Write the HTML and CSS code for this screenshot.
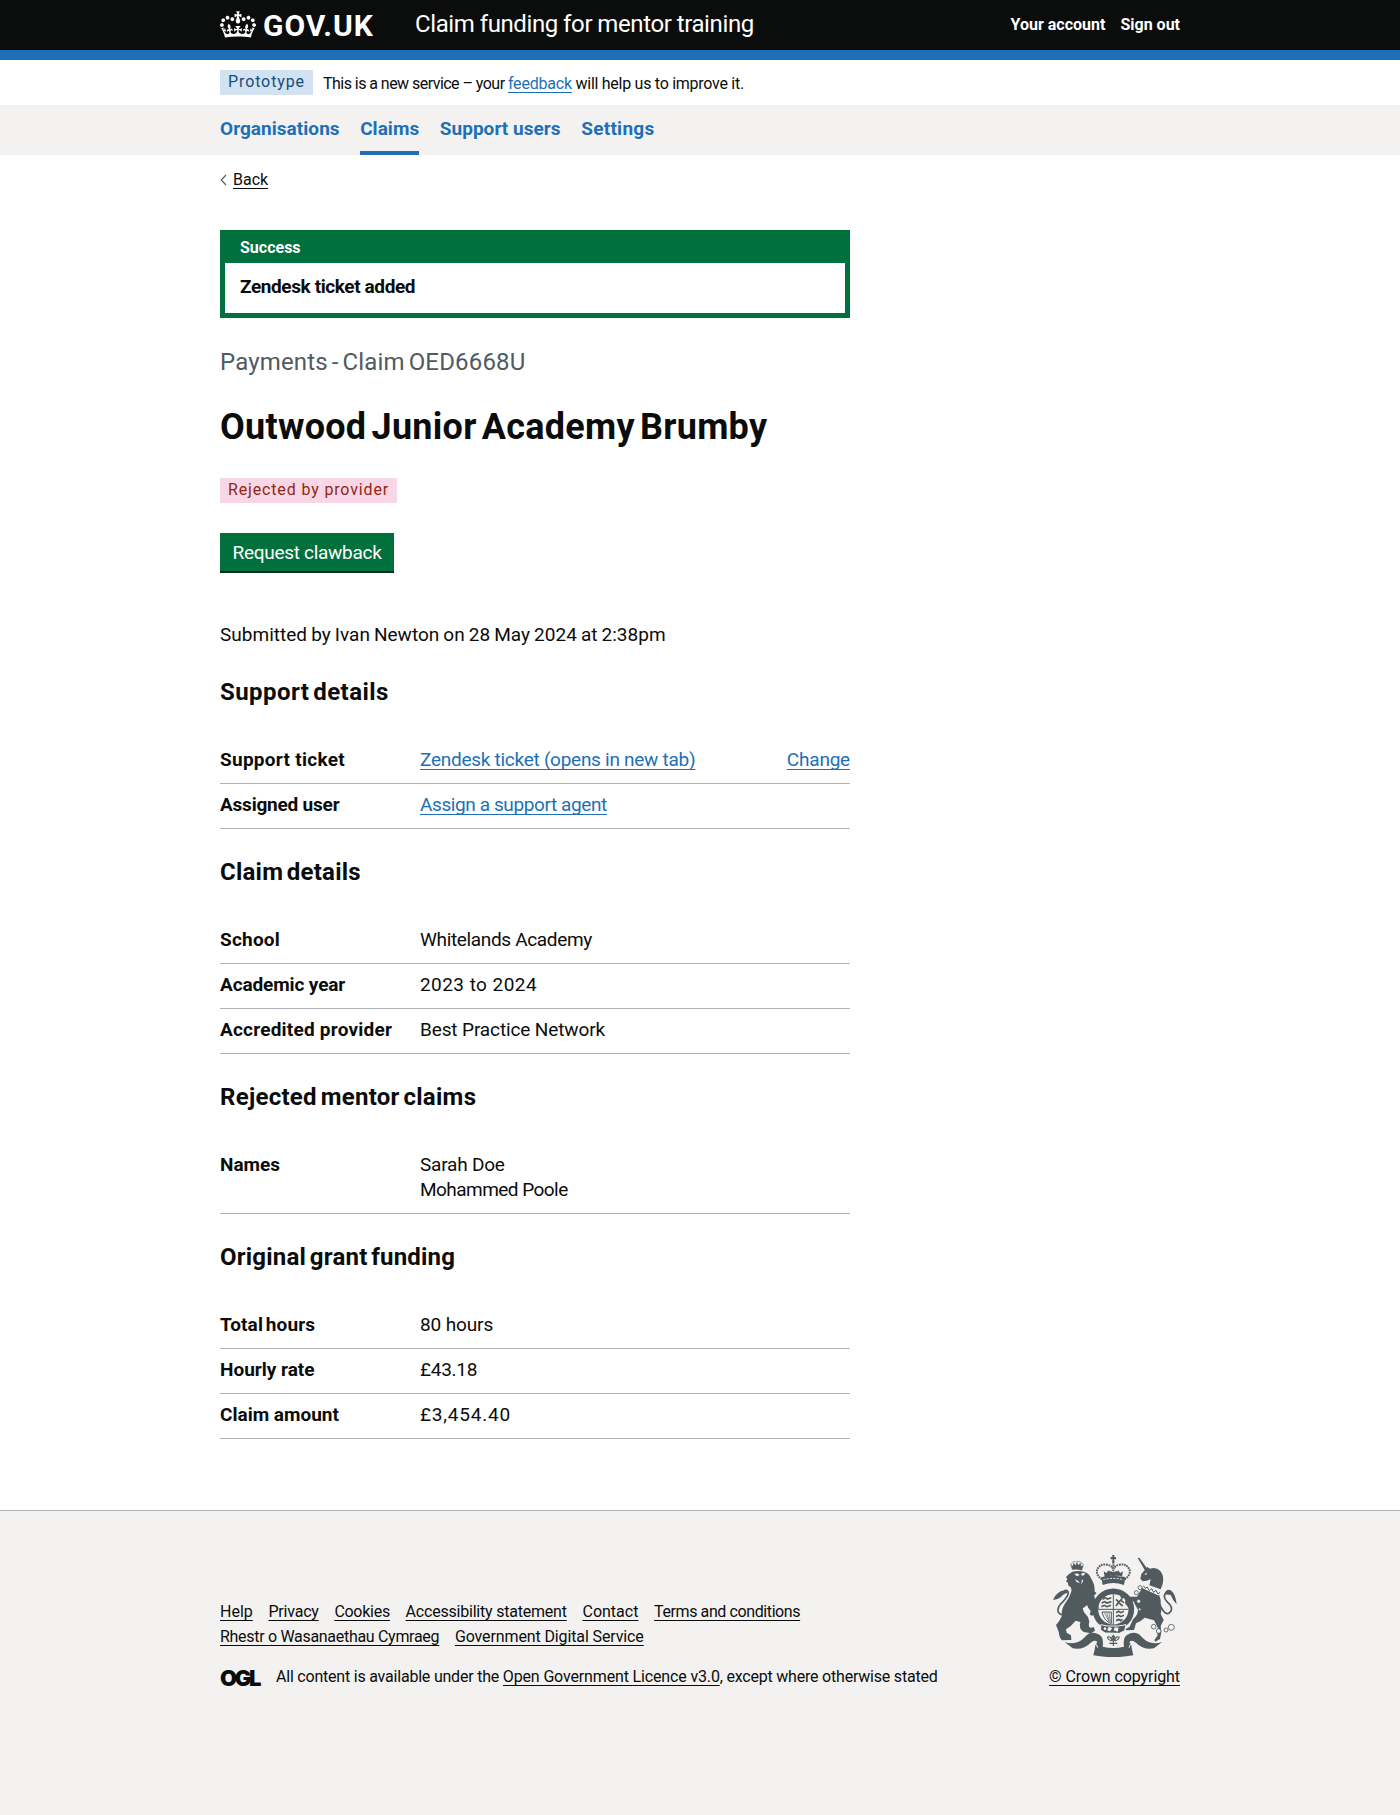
FILE: index.html
```html
<!DOCTYPE html>
<html lang="en">
<head>
<meta charset="utf-8">
<title>Outwood Junior Academy Brumby - Claim funding for mentor training</title>
<link rel="stylesheet" href="styles.css">
</head>
<body>
<header class="header">
  <div class="container header-inner">
    <a class="logo" href="#">
      <svg class="crown" viewBox="0 0 132 97" aria-hidden="true"><path d="M25 30.2c3.5 1.5 7.7-.2 9.1-3.7 1.5-3.6-.2-7.8-3.9-9.2-3.6-1.4-7.6.3-9.1 3.9-1.4 3.5.3 7.5 3.9 9zM9 39.5c3.6 1.5 7.8-.2 9.2-3.7 1.5-3.6-.2-7.8-3.9-9.1-3.6-1.5-7.6.2-9.1 3.8-1.4 3.5.3 7.5 3.8 9zM4.4 57.2c3.5 1.5 7.7-.2 9.1-3.8 1.5-3.6-.2-7.7-3.9-9.1-3.5-1.5-7.6.3-9.1 3.8-1.4 3.5.3 7.6 3.9 9.1zm38.3-21.4c3.5 1.5 7.7-.2 9.1-3.8 1.5-3.6-.2-7.7-3.9-9.1-3.6-1.5-7.6.3-9.1 3.8-1.3 3.6.4 7.7 3.9 9.1zm64.4-5.6c-3.6 1.5-7.8-.2-9.1-3.7-1.5-3.6.2-7.8 3.8-9.2 3.6-1.4 7.7.3 9.2 3.9 1.3 3.5-.4 7.5-3.9 9zm15.9 9.3c-3.6 1.5-7.7-.2-9.1-3.7-1.5-3.6.2-7.8 3.7-9.1 3.6-1.5 7.7.2 9.2 3.8 1.5 3.5-.3 7.5-3.8 9zm4.7 17.7c-3.6 1.5-7.8-.2-9.2-3.8-1.5-3.6.2-7.7 3.9-9.1 3.6-1.5 7.7.3 9.2 3.8 1.3 3.5-.4 7.6-3.9 9.1zM89.3 35.8c-3.6 1.5-7.8-.2-9.2-3.8-1.4-3.6.2-7.7 3.9-9.1 3.6-1.5 7.7.3 9.2 3.8 1.4 3.6-.3 7.7-3.9 9.1zM69.7 17.7l8.9 4.7V9.3l-8.9 2.8c-.2-.3-.5-.6-.9-.9L72.4 0H59.6l3.5 11.2c-.3.3-.6.5-.9.9l-8.8-2.8v13.1l8.8-4.7c.3.3.6.7.9.9l-5 15.4v.1c-.2.8-.4 1.6-.4 2.4 0 4.1 3.1 7.5 7 8.1h.2c.3 0 .7.1 1 .1.4 0 .7 0 1-.1h.2c4-.6 7.1-4.1 7.1-8.1 0-.8-.1-1.7-.4-2.4V34l-5.1-15.4c.4-.2.7-.6 1-.9zM66 92.8c16.9 0 32.8 1.1 47.1 3.2 4-16.9 8.9-26.7 14-33.5l-9.6-3.4c1 4.9 1.1 7.2 0 10.2-1.5-1.4-3-4.3-4.2-8.7L108.6 76c2.8-2 5-3.2 7.5-3.3-4.4 9.4-10 11.9-13.6 11.2-4.3-.8-6.3-4.6-5.6-7.9 1-4.7 5.7-5.9 8-.5 4.3-8.7-3-11.4-7.6-8.8 7.1-7.2 7.9-13.5 2.1-21.1-8 6.1-8.1 12.3-4.5 20.8-4.7-5.4-12.1-2.5-9.5 6.2 3.4-5.2 7.9-2 7.2 3.1-.6 4.3-6.4 7.8-13.5 7.2-10.3-.9-10.9-8-11.2-13.8 2.5-.5 7.1 1.8 11 7.3L80.2 60c-4.1 4.4-8 5.3-12.3 5.4 1.4-4.4 8-11.6 8-11.6H55.5s6.4 7.2 7.9 11.6c-4.2-.1-8-1-12.3-5.4l1.4 16.4c3.9-5.5 8.5-7.7 10.9-7.3-.3 5.8-.9 12.8-11.1 13.8-7.2.6-12.9-2.9-13.5-7.2-.7-5 3.8-8.3 7.1-3.1 2.7-8.7-4.6-11.6-9.4-6.2 3.7-8.5 3.6-14.7-4.6-20.8-5.8 7.6-5 13.9 2.2 21.1-4.7-2.6-11.9.1-7.7 8.8 2.3-5.5 7.1-4.2 8.1.5.7 3.3-1.3 7.1-5.7 7.9-3.5.7-9-1.8-13.5-11.2 2.5.1 4.7 1.3 7.5 3.3l-4.7-15.4c-1.2 4.4-2.7 7.2-4.3 8.7-1.1-3-.9-5.3 0-10.2l-9.5 3.4c5 6.9 9.9 16.7 14 33.5 14.8-2.1 30.8-3.2 47.7-3.2z"/></svg>
      <span class="logo-text">GOV.UK</span>
    </a>
    <a class="service-name" href="#">Claim funding for mentor training</a>
    <nav class="account">
      <a href="#">Your account</a>
      <a href="#">Sign out</a>
    </nav>
  </div>
</header>
<div class="blue-bar"></div>

<div class="container phase">
  <strong class="tag tag-blue">Prototype</strong>
  <p class="phase-text"><span class="ls-n54">This is a new service – your </span><a class="link ls-n20" href="#">feedback</a><span class="ls-n27"> will help us to improve it.</span></p>
</div>

<nav class="primary-nav">
  <div class="container nav-list">
    <a class="nav-item" href="#">Organisations</a>
    <a class="nav-item nav-current" href="#">Claims</a>
    <a class="nav-item" href="#">Support users</a>
    <a class="nav-item ls-p27" href="#">Settings</a>
  </div>
</nav>

<main class="container main">
  <div class="back">
    <svg class="chevron" viewBox="0 0 7 12" aria-hidden="true"><path d="M6 1 1.2 6 6 11" fill="none" stroke="#505a5f" stroke-width="1.2"/></svg>
    <a class="text-link" href="#">Back</a>
  </div>

  <div class="column">
    <section class="banner">
      <h2 class="banner-title">Success</h2>
      <p class="banner-content">Zendesk ticket added</p>
    </section>

    <p class="caption">Payments - Claim OED6668U</p>
    <h1 class="title">Outwood Junior Academy Brumby</h1>
    <strong class="tag tag-red">Rejected by provider</strong>
    <button class="button" type="button">Request clawback</button>
    <p class="submitted">Submitted by Ivan Newton on 28 May 2024 at 2:38pm</p>

    <h2 class="heading ls-p44">Support details</h2>
    <dl class="summary">
      <div class="row"><dt class="key ls-p27">Support ticket</dt><dd class="value"><a class="link ls-n27" href="#">Zendesk ticket (opens in new tab)</a></dd><dd class="action"><a class="link ls-n20" href="#">Change</a></dd></div>
      <div class="row"><dt class="key ls-n20">Assigned user</dt><dd class="value"><a class="link ls-n40" href="#">Assign a support agent</a></dd></div>
    </dl>

    <h2 class="heading ls-p20">Claim details</h2>
    <dl class="summary">
      <div class="row"><dt class="key ls-p20">School</dt><dd class="value ls-n34">Whitelands Academy</dd></div>
      <div class="row"><dt class="key ls-n12">Academic year</dt><dd class="value ls-p44">2023 to 2024</dd></div>
      <div class="row"><dt class="key ls-p20">Accredited provider</dt><dd class="value ls-n12">Best Practice Network</dd></div>
    </dl>

    <h2 class="heading ls-p27">Rejected mentor claims</h2>
    <dl class="summary">
      <div class="row"><dt class="key">Names</dt><dd class="value"><span class="ls-n20">Sarah Doe</span><br><span class="ls-n54">Mohammed Poole</span></dd></div>
    </dl>

    <h2 class="heading ls-p20">Original grant funding</h2>
    <dl class="summary">
      <div class="row"><dt class="key total">Total hours</dt><dd class="value ls-n12">80 hours</dd></div>
      <div class="row"><dt class="key">Hourly rate</dt><dd class="value ls-n27">£43.18</dd></div>
      <div class="row"><dt class="key">Claim amount</dt><dd class="value ls-p79">£3,454.40</dd></div>
    </dl>
  </div>
</main>

<footer class="footer">
  <div class="container footer-inner">
    <div class="footer-meta">
      <ul class="footer-links">
        <li><a class="text-link" href="#">Help</a></li>
        <li><a class="text-link ls-n20" href="#">Privacy</a></li>
        <li><a class="text-link ls-n27" href="#">Cookies</a></li>
        <li><a class="text-link ls-n20" href="#">Accessibility statement</a></li>
        <li><a class="text-link" href="#">Contact</a></li>
        <li><a class="text-link ls-n40" href="#">Terms and conditions</a></li>
        <li><a class="text-link ls-n30" href="#">Rhestr o Wasanaethau Cymraeg</a></li>
        <li><a class="text-link ls-n12" href="#">Government Digital Service</a></li>
      </ul>
      <div class="licence">
        <span class="ogl">OGL</span>
        <span class="licence-text">All content is available under the <a class="text-link ls-n15" href="#">Open Government Licence v3.0</a>, except where otherwise stated</span>
      </div>
    </div>
    <div class="copyright">
      <svg class="arms" viewBox="39 45 372 306" fill="#505a5f" aria-hidden="true">
        <!-- lion: crown, mane and body, tail -->
        <path d="M96 90 90 72l8 5 3-11 6 9 3-14 5 13 8-7 1 11 8-3-6 17q-14-4-30-2z" stroke="#f3f2f1" stroke-width="1.5"/>
        <g fill="none" stroke="#505a5f" stroke-width="3" stroke-dasharray="3 2"><path d="M92 74q4-10 16-10M112 64q14 0 18 12"/></g>
        <path d="M97 95q16-4 34 0 18 5 22 20 12 18 11 40l6 4-8 8q4 18 14 32l-3 22-18 6-6-4 3-10q-8-8-11-18-8 8-13 10l4 12 12 14 4 14q-4 12 2 18l12-1 3 10-12 8-22-4q-16-8-10-30l-14-4q-14 18-29 26l2 10 13 8 1 14-28 1q-8-8-10-26l-8-20q10-10 18-28-4-18 10-38 12-14 19-38l-3-10q-8-2-9-14l-5-2 4-8-4-6 6-6z"/>
        <path d="m103 103 9-3 7 5-8 4zM122 102l10-4 4 3-8 7zM104 118l10 4 6 8-10-4zM126 118l4 4-7 12z" fill="#f3f2f1"/>
        <path d="M86 213q-18 22-31 4-5-16 12-30 18-18 18-30-3-9-12-5" fill="none" stroke="#505a5f" stroke-width="5"/>
        <path d="M39 180q10-26 37-30l8 8q-16 4-22 14-10 8-23 8z"/>
        <!-- crown -->
        <path d="M216 45h8l-2 6h6v7h-6l2 8h-8l2-8h-6v-7h6z"/>
        <g fill="none" stroke="#505a5f" stroke-width="6" stroke-dasharray="5 2.5"><path d="M186 118q-20-14-14-31 10-17 29-13 15 3 17 12M254 118q20-14 14-31-10-17-29-13-15 3-17 12M220 66v40"/></g>
        <path d="M184 112q36-12 72 0l-4 23q-32-12-64 0zM194 110l-3-16 8 5 7-8 5 17zM246 110l3-16-8 5-7-8-5 17zM210 106l-3-14 13 5 13-5-3 14z"/>
        <path d="M190 119q30-8 60 0" fill="none" stroke="#f3f2f1" stroke-width="3" stroke-dasharray="6 4"/>
        <!-- garter and shield -->
        <circle cx="220" cy="208" r="54" fill="none" stroke="#505a5f" stroke-width="17"/>
        <path d="M220 163v92M175 208h90" fill="none" stroke="#505a5f" stroke-width="3"/>
        <g fill="none" stroke="#505a5f" stroke-width="5"><path d="m188 178 8-5 6 4 12-4M185 189l9-4 7 4 13-4M184 200l9-4 8 4 12-4M228 218l8-4 6 4 10-4M228 230l8-4 6 4 10-4M228 242l8-4 6 4 6-4"/><path d="m228 198 8-12-8-8M236 186l12-12M236 188l12 10M248 174l-6-5M240 180l12 8"/></g>
        <path d="M186 216h28v35q-22-8-28-35z" fill="none" stroke="#505a5f" stroke-width="3"/><path d="M193 217l14 27M200 217l8 28M207 217l4 30" stroke="#505a5f" stroke-width="2"/>
        <path d="m182 254 20 4 34 0 22-4-4 18-16 8-42-1-14-8z" stroke="#f3f2f1" stroke-width="3"/>
        <g fill="#f3f2f1"><circle cx="195" cy="266" r="4"/><path d="m207 260 10 5-7 9-9-4zM224 262l12 1-3 12-12-4z"/></g>
        <!-- unicorn: horn, head and body, tail, chain -->
        <path d="m293 54 5-1 25 35-7 5z"/>
        <path d="m301 116 3-14 12-14 6-7 8 5q18-6 30 6 14 14 8 40l-6 16-34-12 4-18-12 4-12 2z"/>
        <path d="M308 141q22 2 48 19l6 20q-1 16 4 22l-4 20 9 18-9 18 2 18-4 21-14 8-3-5 9-12 2-24-12-23-28-8q-12 12-26 17l-6 20-24 1-1-4 12-7 10-22q14-11 15-28l-14-26-14-2-2 13 9 10-5 2-13-17 2-14 8-6h26z"/>
        <path d="m310 139 48 22" fill="none" stroke="#f3f2f1" stroke-width="12"/>
        <path d="m310 137 6 8 6-4 6 11 7-6 6 11 7-6 6 11 6-5" fill="none" stroke="#505a5f" stroke-width="3"/>
        <path d="m313 102 9-4-4 7z" fill="#f3f2f1"/>
        <path d="M364 203q16 30 29 10 6-12-10-26-14-14-8-25 7-10 16-4" fill="none" stroke="#505a5f" stroke-width="5"/>
        <path d="M374 163q4-18 18-12 14 8 18 42-12-12-18-28z"/>
        <g fill="#f3f2f1" stroke="#505a5f" stroke-width="2.5"><circle cx="300" cy="143" r="6"/><circle cx="289" cy="158" r="6"/><circle cx="296" cy="184" r="6"/><circle cx="341" cy="260" r="7"/><circle cx="356" cy="273" r="7"/><circle cx="378" cy="270" r="6"/><circle cx="394" cy="262" r="9"/><circle cx="299" cy="208" r="4"/></g>
        <!-- motto ribbon and flower -->
        <path d="M74 306q36 12 60-14 18-22 44-8 14 8 10 36 32 8 64 0-4-28 10-36 26-14 44 8 24 26 60 14l-24 19q-32 6-54-17-12-11-20-2l6 10q2 16 6 30-60 11-120 0 4-14 6-30l6-10q-8-9-20 2-22 23-54 17z"/>
        <path d="M163 309q7 2 10 14M277 309q-7 2-10 14" fill="none" stroke="#f3f2f1" stroke-width="3"/>
        <g fill="none" stroke="#505a5f" stroke-width="3.5"><path d="M220 284v34M220 286q-9 8 0 15 9-7 0-15M215 303q-14-6-12-12 8-4 14 11M225 303q14-6 12-12-8-4-14 11M208 310h24"/></g>
      </svg>
      <a class="text-link" href="#">© Crown copyright</a>
    </div>
  </div>
</footer>
</body>
</html>
```
FILE: styles.css
```css
* { box-sizing: border-box; }
body {
  margin: 0;
  min-height: 1815px;
  display: flex;
  flex-direction: column;
  background: #fff;
  color: #0b0c0c;
  font-family: Roboto, "Liberation Sans", sans-serif;
  font-size: 19px;
  line-height: 25px;
}
h1, h2, p, dl, dd, ul { margin: 0; padding: 0; }
a { color: inherit; text-decoration: none; }
.container { width: 960px; margin: 0 auto; }

.link, .text-link {
  text-decoration: underline;
  text-decoration-thickness: 1px;
  text-underline-offset: 3px;
  text-decoration-skip-ink: none;
}
.link { color: #1d70b8; }

/* letter-spacing adjustments */
.ls-n54 { letter-spacing: -0.54px; }
.ls-n40 { letter-spacing: -0.4px; }
.ls-n34 { letter-spacing: -0.34px; }
.ls-n30 { letter-spacing: -0.3px; }
.ls-n27 { letter-spacing: -0.27px; }
.ls-n20 { letter-spacing: -0.21px; }
.ls-n15 { letter-spacing: -0.15px; }
.ls-n12 { letter-spacing: -0.12px; }
.ls-p20 { letter-spacing: 0.22px; }
.ls-p27 { letter-spacing: 0.28px; }
.ls-p44 { letter-spacing: 0.44px; }
.ls-p79 { letter-spacing: 0.79px; }

.header { background: #0b0c0c; color: #fff; height: 50px; }
.header-inner { display: flex; align-items: flex-start; height: 50px; }
.logo { display: flex; width: 195px; gap: 7px; }
.crown { width: 36px; height: 27px; margin-top: 11px; fill: #fff; }
.logo-text { font-size: 30px; font-weight: 700; line-height: 52px; letter-spacing: 1px; }
.service-name { font-size: 24px; line-height: 48px; letter-spacing: -0.38px; word-spacing: -0.4px; }
.account { display: flex; gap: 15px; margin-left: auto; font-size: 16px; font-weight: 700; line-height: 49px; }
.blue-bar { height: 10px; background: #1d70b8; }

.phase { display: flex; height: 45px; padding-top: 10px; gap: 10px; }
.tag { display: block; height: 25px; padding: 0 8px; font-size: 16px; font-weight: 400; line-height: 23px; white-space: nowrap; }
.tag-blue { width: 93px; background: #d2e2f1; color: #144e81; letter-spacing: 0.89px; }
.tag-red { width: 177px; margin-top: 31px; background: #f7d7e6; color: #942514; letter-spacing: 0.85px; }
.phase-text { font-size: 16px; line-height: 27px; }

.primary-nav { background: #f3f2f1; }
.nav-list { display: flex; gap: 20.5px; }
.nav-item { height: 50px; line-height: 47px; font-weight: 700; color: #1d70b8; white-space: nowrap; letter-spacing: 0.04px; }
.nav-item.ls-p27 { letter-spacing: 0.28px; }
.nav-current { border-bottom: 4px solid #1d70b8; }

.main { flex: none; }
.back { display: flex; gap: 6px; padding-top: 15px; font-size: 16px; line-height: 20px; }
.chevron { width: 7px; height: 12px; margin-top: 4px; }
.column { width: 630px; margin-top: 40px; }

.banner { border: 5px solid #00703c; border-top: 0; }
.banner-title { padding: 2px 15px 0; background: #00703c; color: #fff; font-size: 16px; line-height: 31px; }
.banner-content { padding: 0 15px 3px; font-weight: 700; line-height: 47px; letter-spacing: -0.4px; }

.caption { margin-top: 29px; color: #505a5f; font-size: 24px; line-height: 30px; letter-spacing: 0.17px; word-spacing: -2.2px; }
.title { margin-top: 30px; font-size: 36px; line-height: 40px; letter-spacing: 0.26px; word-spacing: -4px; }
.button {
  display: block;
  width: 174px;
  height: 40px;
  margin-top: 30px;
  padding: 0;
  border: 0;
  border-bottom: 2px solid #002d18;
  background: #00703c;
  color: #fff;
  font: 400 19px/39px Roboto, "Liberation Sans", sans-serif;
  letter-spacing: -0.29px;
}
.submitted { margin-top: 49px; letter-spacing: 0.02px; word-spacing: -0.7px; }

.heading { margin-top: 28px; font-size: 24px; line-height: 30px; word-spacing: -2.5px; }
.submitted + .heading { margin-top: 30px; }
.summary { margin-top: 32px; }
.row { display: grid; grid-template-columns: 200px 1fr auto; padding: 8px 0 11px; border-bottom: 1px solid #b1b4b6; }
.key { font-weight: 700; }
.total { letter-spacing: 0.1px; word-spacing: -2px; }

.footer { flex: 1; margin-top: 71px; border-top: 1px solid #b1b4b6; background: #f3f2f1; font-size: 16px; }
.footer-inner { display: flex; justify-content: space-between; }
.footer-meta { padding-top: 88px; }
.footer-links { display: flex; flex-wrap: wrap; column-gap: 15.7px; width: 640px; list-style: none; }
.licence { display: flex; align-items: flex-start; margin-top: 15px; }
.ogl { width: 56px; font: 900 22px/29px Inter, sans-serif; letter-spacing: -2.3px; }
.licence-text { letter-spacing: -0.21px; white-space: nowrap; }
.copyright { display: flex; flex-direction: column; align-items: center; gap: 7px; padding-top: 44px; letter-spacing: -0.09px; }
.arms { display: block; width: 124px; height: 102px; }
```
